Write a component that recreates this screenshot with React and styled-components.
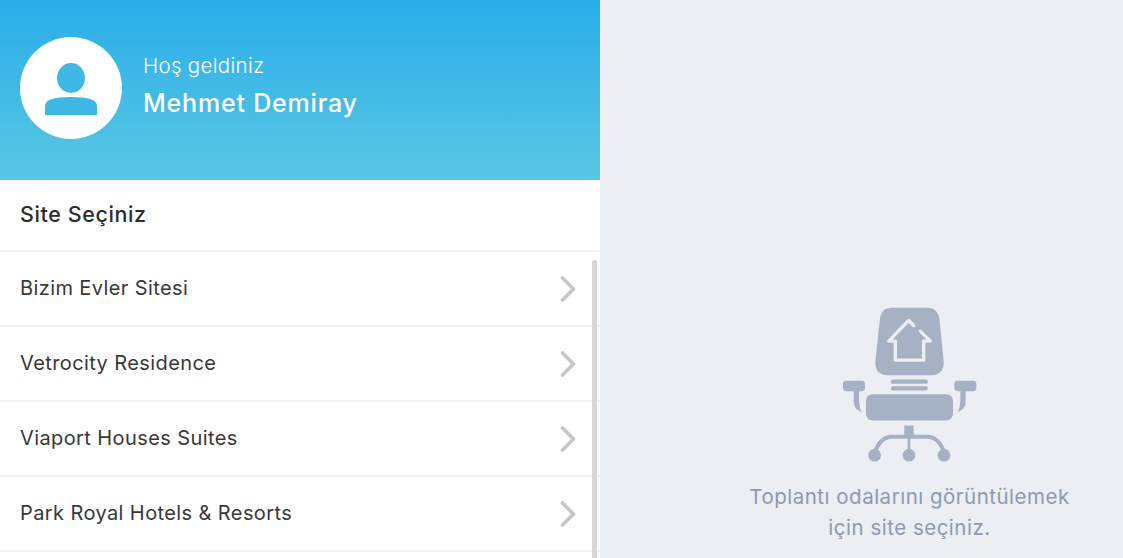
import styled, { createGlobalStyle } from 'styled-components'

const sites = ['Bizim Evler Sitesi', 'Vetrocity Residence', 'Viaport Houses Suites', 'Park Royal Hotels & Resorts']

const GlobalStyle = createGlobalStyle`
  html, body { margin: 0; padding: 0; overflow: hidden; }
  body { font-family: Inter, "Open Sans", sans-serif; }
`

const Page = styled.div`
  display: flex;
  width: 1123px;
  height: 558px;
  overflow: hidden;
`

const Sidebar = styled.div`
  position: relative;
  width: 600px;
  height: 558px;
  overflow: hidden;
  background: #fff;
`

const Header = styled.header`
  display: flex;
  align-items: flex-start;
  gap: 21px;
  height: 180px;
  box-sizing: border-box;
  padding: 37px 20px 0;
  background: linear-gradient(180deg, #2aade9 0%, #59c7e3 100%);
`

const Avatar = styled.div`
  display: flex;
  align-items: center;
  justify-content: center;
  width: 102px;
  height: 102px;
  border-radius: 50%;
  background: #fff;
`

const Welcome = styled.div`
  display: flex;
  flex-direction: column;
  gap: 7px;
  padding-top: 16px;
  color: #fff;
`

const Hello = styled.span`
  font-size: 20.5px;
  font-weight: 300;
  line-height: 26px;
  letter-spacing: 0.3px;
`

const Name = styled.span`
  font-size: 25px;
  font-weight: 500;
  line-height: 34px;
  letter-spacing: 0.8px;
`

const Title = styled.div`
  display: flex;
  align-items: center;
  height: 72px;
  box-sizing: border-box;
  padding: 0 20px 2px;
  border-bottom: 2px solid #f0f0f0;
  color: #2b2b2b;
  font-size: 21.5px;
  font-weight: 500;
  letter-spacing: 0.6px;
`

const Row = styled.div`
  display: flex;
  align-items: center;
  justify-content: space-between;
  height: 75px;
  box-sizing: border-box;
  padding: 0 24px 2px 20px;
  border-bottom: 2px solid #f0f0f0;
  color: #383838;
  font-size: 20px;
  letter-spacing: 0.4px;
`

const ChevronIcon = styled.svg`
  margin-top: 2px;
`

const ScrollThumb = styled.div`
  position: absolute;
  top: 260px;
  right: 3px;
  width: 5px;
  height: 320px;
  border-radius: 3px;
  background: #d6d6d6;
`

const Empty = styled.main`
  flex: 1;
  display: flex;
  flex-direction: column;
  align-items: center;
  box-sizing: border-box;
  padding: 306px 0 0 96px;
  background: #ebeef3;
`

const Hint = styled.p`
  margin: 18px 0 0;
  color: #8e9aae;
  font-size: 20.5px;
  line-height: 31px;
  letter-spacing: 0.5px;
  text-align: center;
  white-space: nowrap;
`

function UserIcon() {
  return (
    <svg width="54" height="54" viewBox="45 58 54 54" fill="#3fb8e6">
      <ellipse cx="72" cy="75" rx="14" ry="15" />
      <path d="M46 112 V103 C46 97 54 94 72 94 C90 94 98 97 98 103 V112 Z" />
    </svg>
  )
}

function Chevron() {
  return (
    <ChevronIcon width="16" height="26" viewBox="0 0 16 26" fill="none" stroke="#c6c6c6" strokeWidth="3.6" strokeLinecap="round" strokeLinejoin="round">
      <path d="M2.5 2 L13.5 13 L2.5 24" />
    </ChevronIcon>
  )
}

function ChairIcon() {
  return (
    <svg width="135" height="157" viewBox="65 50 405 470" fill="#a6b2c3">
      <path d="M215 55 H320 Q355 55 358 95 L370 215 Q372 257 330 257 H205 Q163 257 165 215 L178 95 Q180 55 215 55 Z" />
      <path d="M280 108 L265 93 L205 155 H225 V212 H310 V155 H330 L300 125" fill="none" stroke="#ebeef3" strokeWidth="10" strokeLinecap="round" strokeLinejoin="round" />
      <rect x="212" y="270" width="110" height="13" rx="5" />
      <rect x="212" y="290" width="110" height="13" rx="5" />
      <rect x="68" y="274" width="66" height="31" rx="10" />
      <path d="M100 303 H116 V335 Q117 350 123 368 Q100 358 100 335 Z" />
      <rect x="402" y="274" width="66" height="31" rx="10" />
      <path d="M436 303 H420 V335 Q419 350 413 368 Q436 358 436 335 Z" />
      <rect x="137" y="314" width="261" height="79" rx="20" />
      <rect x="252" y="408" width="28" height="32" />
      <rect x="262" y="436" width="8" height="50" />
      <path d="M163 490 Q180 442 215 442 H320 Q355 442 372 490" fill="none" stroke="#a6b2c3" strokeWidth="12" />
      <circle cx="163" cy="497" r="19" />
      <circle cx="266" cy="497" r="19" />
      <circle cx="371" cy="497" r="19" />
    </svg>
  )
}

export default function App() {
  return (
    <Page>
      <GlobalStyle />
      <Sidebar>
        <Header>
          <Avatar>
            <UserIcon />
          </Avatar>
          <Welcome>
            <Hello>Hoş geldiniz</Hello>
            <Name>Mehmet Demiray</Name>
          </Welcome>
        </Header>
        <Title>Site Seçiniz</Title>
        {sites.map(site => (
          <Row key={site}>
            {site}
            <Chevron />
          </Row>
        ))}
        <ScrollThumb />
      </Sidebar>
      <Empty>
        <ChairIcon />
        <Hint>
          Toplantı odalarını görüntülemek
          <br />
          için site seçiniz.
        </Hint>
      </Empty>
    </Page>
  )
}
